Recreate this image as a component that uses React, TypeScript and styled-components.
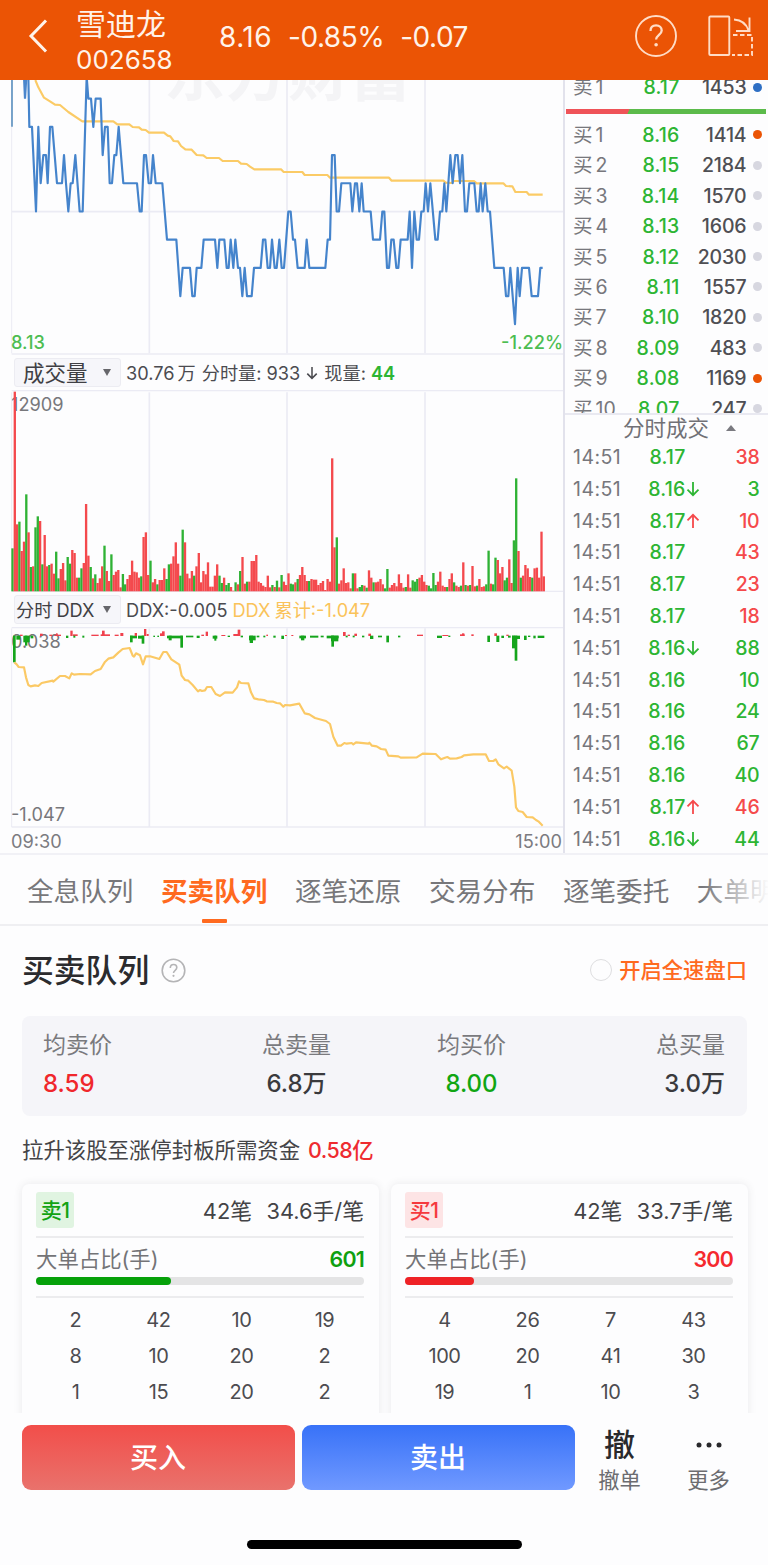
import React from "react";
import styled, { createGlobalStyle } from "styled-components";

const GREEN = "#2db533";
const RED = "#f5494b";
const ORANGE = "#ff6a1f";
const GRID = "#ebebf4";

const GlobalStyle = createGlobalStyle`
  * { box-sizing: border-box; }
  body {
    margin: 0;
    background: #fdfdfe;
    font-family: Inter, "Noto Sans CJK SC", sans-serif;
    color: #333;
  }
`;

const Page = styled.div`
  width: 768px;
  height: 1565px;
  display: flex;
  flex-direction: column;
  overflow: hidden;
  background: #fdfdfe;
`;

/* ---------- header ---------- */

const Header = styled.header`
  height: 80px;
  flex: none;
  display: flex;
  align-items: center;
  padding: 0 15px 0 28px;
  background: #eb5405;
  color: #fff3ea;
`;

const BackIcon = styled.svg`
  flex: none;
  margin-top: -8px;
`;

const StockName = styled.div`
  width: 143px;
  margin-left: 26px;
  padding-top: 2px;
`;

const Name = styled.div`
  font-size: 30px;
  line-height: 38px;
`;

const Code = styled.div`
  font-size: 26px;
  line-height: 34px;
  letter-spacing: 0;
`;

const Quote = styled.div`
  flex: 1;
  display: flex;
  gap: 16px;
  margin-top: -6px;
  font-size: 28px;
  line-height: 36px;
`;

const QuoteValue = styled.span<{ $ls: number }>`
  letter-spacing: ${(p) => p.$ls}px;
`;

const HeaderIcons = styled.div`
  display: flex;
  align-items: center;
  gap: 30px;
  margin-top: -8px;
`;

/* ---------- market area ---------- */

const Market = styled.section`
  flex: none;
  height: 775px;
  display: flex;
  border-bottom: 2px solid #f1f1f6;
`;

const Charts = styled.div`
  width: 565px;
  flex: none;
  border-right: 2px solid #e2e2ec;
`;

const ChartFrame = styled.div<{ $h: number }>`
  position: relative;
  height: ${(p) => p.$h}px;
  overflow: hidden;
`;

const ChartCanvas = styled.svg`
  display: block;
  position: relative;
`;

const ChartLabel = styled.span<{ $color?: string; $side?: "left" | "right"; $top?: number; $bold?: boolean }>`
  position: absolute;
  top: ${(p) => p.$top ?? 0}px;
  ${(p) => (p.$side === "right" ? "right: 0;" : "left: 11px;")}
  color: ${(p) => p.$color ?? "#77777b"};
  font-size: 18.2px;
  line-height: 22px;
  font-weight: ${(p) => (p.$bold ? 500 : 400)};
`;

const Watermark = styled.span`
  position: absolute;
  left: 164px;
  top: -41px;
  font-size: 61px;
  line-height: 70px;
  font-weight: 700;
  letter-spacing: 1px;
  color: #f4f4f6;
`;

const IndicatorBar = styled.div`
  height: 35px;
  display: flex;
  align-items: center;
  padding-left: 14px;
  font-size: 18.2px;
  line-height: 26px;
  color: #4b4b50;
  white-space: nowrap;
`;

const Chip = styled.div<{ $size: number; $pad: number }>`
  width: 107px;
  height: 29px;
  flex: none;
  display: flex;
  align-items: center;
  justify-content: space-between;
  padding: 0 9px 0 ${(p) => p.$pad}px;
  margin-right: 5px;
  border: 1px solid #ececf2;
  border-radius: 3px;
  background: #f6f6fa;
  color: #3f3f44;
  font-size: ${(p) => p.$size}px;
`;

const Triangle = styled.i<{ $up?: boolean }>`
  border: ${(p) => (p.$up ? 5 : 4.5)}px solid transparent;
  ${(p) =>
    p.$up
      ? "border-bottom: 6px solid #7a7a80; border-top: 0;"
      : "border-top: 7px solid #66666b; border-bottom: 0;"}
`;

const Seg = styled.span<{ $color?: string; $gap?: number; $ls?: number; $bold?: boolean }>`
  color: ${(p) => p.$color ?? "inherit"};
  margin-left: ${(p) => p.$gap ?? 0}px;
  letter-spacing: ${(p) => p.$ls ?? 0}px;
  font-weight: ${(p) => (p.$bold ? 600 : 400)};
`;

const ArrowSlot = styled.span<{ $gap?: number }>`
  display: flex;
  margin-left: ${(p) => p.$gap ?? 0}px;
`;

const TimeAxis = styled.div`
  height: 26px;
  display: flex;
  justify-content: space-between;
  padding: 0 1px 0 11px;
  font-size: 18.2px;
  line-height: 27px;
  color: #7b7b80;
`;

/* ---------- order book ---------- */

const Side = styled.div`
  flex: 1;
  display: flex;
  flex-direction: column;
`;

const Book = styled.div`
  height: 334.5px;
  flex: none;
  overflow: hidden;
  border-bottom: 2px solid #e9e9f1;
`;

const BookRow = styled.div<{ $first?: boolean }>`
  height: 30.45px;
  margin-top: ${(p) => (p.$first ? -8.2 : 0)}px;
  display: grid;
  grid-template-columns: 52px 54.5px 67px 22.5px;
  align-items: center;
  padding-left: 8px;
  font-size: 19.5px;
  line-height: 30px;
`;

const Level = styled.span`
  color: #77777c;
  display: flex;
  gap: 3px;
`;

const Price = styled.span`
  color: ${GREEN};
  text-align: right;
  font-weight: 500;
  letter-spacing: 0.2px;
`;

const Qty = styled.span`
  color: #4f4f54;
  text-align: right;
  font-weight: 500;
  letter-spacing: -0.15px;
`;

const Dot = styled.i<{ $color: string }>`
  width: 9px;
  height: 9px;
  border-radius: 50%;
  justify-self: center;
  background: ${(p) => p.$color};
`;

const Ratio = styled.div`
  height: 4.5px;
  margin: 6.8px 3px 6px 1px;
  background: linear-gradient(115deg, #ef5358 0 31.3%, #5cbb4b 31.6%);
`;

const TradesHead = styled.div`
  height: 27.2px;
  flex: none;
  display: flex;
  align-items: center;
  gap: 17px;
  padding-left: 58px;
  font-size: 21.5px;
  line-height: 27px;
  color: #717176;
`;

const TradeRow = styled.div`
  height: 31.8px;
  flex: none;
  display: grid;
  grid-template-columns: 75px 37.5px 20px 54px;
  align-items: center;
  padding-left: 8px;
  font-size: 19.5px;
  line-height: 31px;
`;

const TradeTime = styled.span`
  color: #77777c;
  letter-spacing: 0.45px;
`;

const TradeQty = styled.span<{ $up: boolean }>`
  color: ${(p) => (p.$up ? RED : GREEN)};
  text-align: right;
  font-weight: 500;
  letter-spacing: -0.2px;
`;

/* ---------- tabs ---------- */

const Tabs = styled.nav`
  position: relative;
  flex: none;
  height: 71px;
  display: flex;
  gap: 27.6px;
  padding-left: 27px;
  overflow: hidden;
  border-bottom: 2px solid #efeff2;
  white-space: nowrap;
  &::after {
    content: "";
    position: absolute;
    right: 0;
    top: 0;
    width: 66px;
    height: 60px;
    background: linear-gradient(90deg, rgba(253, 253, 254, 0), rgba(253, 253, 254, 0.98));
  }
`;

const Tab = styled.div<{ $on?: boolean }>`
  flex: none;
  display: flex;
  flex-direction: column;
  align-items: center;
  justify-content: space-between;
  font-size: 26.6px;
  line-height: 40px;
  padding-top: 16px;
  color: ${(p) => (p.$on ? ORANGE : "#77777a")};
  font-weight: ${(p) => (p.$on ? 700 : 400)};
  &::after {
    content: "";
    width: 25px;
    height: 4px;
    margin-bottom: 1px;
    border-radius: 1px;
    background: ${(p) => (p.$on ? ORANGE : "transparent")};
  }
`;

/* ---------- queue section ---------- */

const Queue = styled.section`
  flex: none;
  height: 487px;
  overflow: hidden;
  padding: 21px 21px 0 22px;
`;

const TitleRow = styled.div`
  height: 46px;
  display: flex;
  align-items: center;
`;

const Title = styled.h2`
  margin: 0 12px 0 0;
  padding-top: 2px;
  font-size: 31.8px;
  line-height: 46px;
  font-weight: 500;
  color: #2b2b2e;
`;

const FullSpeed = styled.div`
  margin-left: auto;
  display: flex;
  align-items: center;
  gap: 7px;
  font-size: 21.3px;
  font-weight: 500;
  line-height: 26px;
  color: ${ORANGE};
`;

const FullSpeedText = styled.span`
  padding-bottom: 1px;
`;

const Radio = styled.i`
  width: 22px;
  height: 22px;
  border-radius: 50%;
  border: 1.5px solid #dedee0;
`;

const Summary = styled.div`
  height: 100px;
  margin-top: 23px;
  padding: 10px 22px 0 21px;
  display: flex;
  justify-content: space-between;
  border-radius: 8px;
  background: #f5f5f9;
`;

const Stat = styled.div<{ $align: string; $shift?: number }>`
  display: flex;
  flex-direction: column;
  align-items: ${(p) => p.$align};
  margin-left: ${(p) => p.$shift ?? 0}px;
`;

const StatLabel = styled.span`
  font-size: 23px;
  line-height: 38px;
  color: #7a7a7e;
`;

const StatValue = styled.span<{ $color?: string }>`
  font-size: 24px;
  line-height: 40px;
  font-weight: 500;
  color: ${(p) => p.$color ?? "#3a3a3d"};
`;

const Funding = styled.div`
  display: flex;
  gap: 8px;
  margin-top: 18px;
  font-size: 21.4px;
  line-height: 32px;
  color: #444447;
  b { font-weight: 500; color: #ee2b30; letter-spacing: -0.5px; }
`;

const Cards = styled.div`
  display: flex;
  gap: 12px;
  margin-top: 18px;
`;

const Card = styled.div`
  flex: 1;
  height: 300px;
  padding: 8px 15px 0 14px;
  border-radius: 7px;
  background: #fdfdfe;
  box-shadow: 0 0 9px rgba(60, 60, 70, 0.1);
`;

const CardHead = styled.div`
  height: 46px;
  display: flex;
  align-items: flex-start;
  border-bottom: 2px solid #ececee;
  font-size: 21.8px;
  line-height: 38px;
  color: #434346;
`;

const Badge = styled.span<{ $buy: boolean }>`
  width: 38px;
  height: 36px;
  margin-right: auto;
  text-align: center;
  border-radius: 3px;
  font-weight: 500;
  font-size: 21px;
  line-height: 37px;
  letter-spacing: -0.5px;
  color: ${(p) => (p.$buy ? "#f5393d" : "#12a312")};
  background: ${(p) => (p.$buy ? "#fde4e5" : "#e0f4e1")};
`;

const HeadText = styled.span`
  margin-left: 14.5px;
`;

const BigRow = styled.div`
  height: 39px;
  display: flex;
  justify-content: space-between;
  font-size: 21.4px;
  line-height: 42px;
  color: #747477;
`;

const BigValue = styled.span<{ $buy: boolean }>`
  font-weight: 600;
  letter-spacing: -0.8px;
  color: ${(p) => (p.$buy ? "#f5292e" : "#0fa00f")};
`;

const Meter = styled.div<{ $buy: boolean; $pct: number }>`
  height: 8px;
  margin-bottom: 11px;
  border-radius: 4px;
  background: #e4e4e5;
  &::before {
    content: "";
    display: block;
    height: 8px;
    width: ${(p) => p.$pct}%;
    border-radius: 4px;
    background: ${(p) => (p.$buy ? "#ef2226" : "#06a10a")};
  }
`;

const Lots = styled.div`
  display: grid;
  grid-template-columns: repeat(4, 83px);
  grid-auto-rows: 36px;
  margin: 0 -2px;
  padding-top: 4px;
  text-align: center;
  font-size: 20px;
  line-height: 36px;
  letter-spacing: -0.4px;
  color: #4c4c50;
`;

const Rule = styled.div`
  height: 2px;
  background: #ececee;
`;

/* ---------- bottom bar ---------- */

const Bottom = styled.footer`
  flex: 1;
  display: flex;
  flex-direction: column;
  align-items: center;
  background: #fdfdfe;
`;

const Actions = styled.div`
  width: 100%;
  height: 78px;
  display: flex;
  gap: 7px;
  padding: 12px 0 0 21.5px;
`;

const TradeButton = styled.button<{ $buy?: boolean }>`
  width: 273px;
  height: 65px;
  padding: 0;
  border: 0;
  border-radius: 9px;
  color: #fff;
  font: 500 28px/66px Inter, "Noto Sans CJK SC", sans-serif;
  background: ${(p) =>
    p.$buy ? "linear-gradient(#f24e4a, #e9726c)" : "linear-gradient(#3872f8, #7099ff)"};
`;

const Tool = styled.div<{ $gap?: number }>`
  width: 60px;
  margin-left: ${(p) => p.$gap ?? 0}px;
  text-align: center;
  font-size: 21.3px;
  line-height: 32px;
  color: #6c6c70;
`;

const ToolGlyph = styled.div`
  height: 39px;
  display: flex;
  align-items: center;
  justify-content: center;
  font-size: 31px;
  line-height: 39px;
  font-weight: 500;
  color: #29292c;
`;

const HomeBar = styled.div`
  width: 275px;
  height: 9px;
  margin-top: 49px;
  border-radius: 5px;
  background: #000;
`;

/* ---------- chart data ---------- */

// Price series: x position followed by its price level (a is the highest, i the lowest).
const PRICE =
  "85^ 88b 96b 108e 115b 122d 130c 138c 143d 150b 157b 171d 186d 192c 198d 205e 212d 218d 226c 239e 248e 260^ 265a 273a 280b 287a 302a 308c 315b 323b 329d 336d 343c 349c 356b 370d 411d 419e 425e 432c 438c 446d 453d 459c 467d 487d 501f 529f 541h 548g 570g 577h 584h 590g 604g 611f 645f 652g 658f 673f 680g 686g 692f 700g 706f 714g 720g 727h 734g 741h 755h 762g 782g 789f 796f 803g 810g 816f 824g 830g 838f 845g 852g 865e 872e 879f 885f 893g 914g 920f 928g 976g 983f 990f 996c 1004c 1010e 1017e 1024d 1051d 1057e 1065d 1071d 1078e 1085d 1091e 1112e 1119f 1140f 1147e 1153e 1161g 1167g 1174f 1181f 1189g 1195g 1202f 1223f 1229e 1236g 1243e 1250f 1257f 1264e 1271e 1277d 1284e 1291d 1306f 1313f 1320e 1327e 1333d 1339e 1351c 1358d 1366c 1373c 1380d 1387c 1395e 1401e 1408d 1423d 1430e 1436e 1442d 1448e 1456d 1463e 1470e 1483g 1511g 1518h 1525h 1531g 1545i 1553g 1559h 1566g 1587g 1595h 1614h 1621g 1628g";

const levelY = (k: string) => (k === "^" ? 5 : 71 + 84.6 * (k.charCodeAt(0) - 97));
const pricePoints = PRICE.split(" ")
  .map((p) => `${parseInt(p, 10)},${levelY(p.slice(-1))}`)
  .join(" ");

const AVERAGE =
  "106,15 115,37 132,68 150,79 165,89 180,90 205,111 247,139 340,139 352,148 388,148 398,156 417,157 425,164 437,165 447,173 492,173 503,182 511,184 521,198 534,199 543,213 556,223 575,224 590,240 610,241 620,249 657,249 668,258 714,258 723,266 740,267 750,275 763,283 843,283 851,291 907,291 914,300 982,300 990,308 1167,308 1175,317 1330,317 1337,323 1354,324 1362,318 1422,318 1430,325 1510,325 1518,333 1537,334 1546,351 1580,351 1587,359 1628,359";

// One entry per minute: colour letter followed by the top of the bar.
const VOLUME =
  "g580 r110 r508 g500 r588 r560 g418 r532 g636 r634 g517 g484 r498 g628 r540 r634 g630 r626 r656 g590 g670 r642 r624 r676 g606 g626 r585 r594 r668 g668 g640 r624 r447 r602 g636 r670 g658 r684 r670 r634 g572 r648 r678 g598 r660 r650 r645 r697 g657 g688 r672 r660 r617 r650 r652 r668 g664 r546 r532 r660 g617 r682 r672 g688 r675 r675 r640 g672 g628 r626 r604 r562 r626 g662 g524 r562 r656 r670 r648 g662 r634 r594 r682 r648 r658 r622 r695 r695 r662 r628 g662 g684 r668 g690 g684 r696 r707 g682 r688 g648 r606 r686 g680 r680 r618 r618 r600 r680 r684 r692 r696 r662 r697 g690 r696 g677 r697 g660 r680 r690 r655 g686 g688 r682 g672 r660 r636 r660 r678 g678 r672 r674 r674 r690 r684 r678 r705 r672 r680 r310 r577 g547 r686 r676 r640 r684 r682 r700 g655 r655 r700 g696 g690 r692 g698 r646 r668 g682 r682 r680 r672 r688 g700 g642 r698 r690 r684 r694 r658 r684 r698 g696 r658 r698 g676 g680 g672 r668 r660 r680 r690 g692 g700 g654 g690 r680 r650 r692 r696 g696 r672 r655 g682 r692 r696 g692 r622 g690 r692 g690 r633 r694 g692 r672 r696 r694 g688 g587 r686 g688 g608 r615 r655 r636 g676 g668 r613 r684 g556 g370 r588 g668 r662 r630 r640 r666 g668 r640 r638 r668 r530 r664";

const volumeBars = VOLUME.split(" ").map((v, i) => ({
  x: 34 + i * 6.9,
  top: Number(v.slice(1)),
  up: v[0] === "r",
}));

const DDX_LINE =
  "43,217 50,223 56,231 72,232 78,262 85,285 92,289 105,286 115,288 125,279 158,272 160,275 180,258 195,258 208,265 215,250 222,254 240,252 272,253 285,243 302,237 314,217 325,206 340,202 355,188 368,177 389,174 398,197 402,200 408,190 420,196 429,223 437,199 450,199 478,207 490,186 500,186 514,208 538,224 545,257 555,270 565,272 578,285 594,304 600,300 606,303 615,301 621,291 634,291 647,312 660,318 675,307 698,308 711,292 717,274 723,279 745,280 753,307 762,325 775,328 792,330 800,334 820,335 830,339 840,340 850,350 855,345 870,346 898,341 914,370 928,373 945,384 978,393 990,402 1000,440 1013,467 1023,467 1033,459 1040,461 1055,459 1060,463 1068,457 1105,461 1108,458 1116,467 1130,469 1143,477 1157,479 1165,497 1195,499 1202,503 1250,502 1268,491 1307,492 1323,508 1335,503 1342,501 1350,506 1370,505 1385,501 1392,496 1420,493 1457,493 1467,513 1480,513 1487,508 1495,523 1512,535 1520,530 1535,542 1543,590 1548,652 1555,663 1568,666 1580,681 1598,682 1608,690 1615,694 1628,707";

// x, width, height; positive heights rise above the zero line, negative ones hang below it.
const DDX_BARS: [number, number, number][] = [
  [39, 8, -80], [49, 12, -12], [60, 8, 4], [70, 19, -20], [75, 7, -30], [92, 8, -8],
  [120, 8, 7], [148, 8, 4], [163, 20, 4], [168, 5, 8], [198, 7, -7], [211, 7, 16], [219, 14, 5],
  [220, 6, -6], [247, 6, -6], [274, 22, 4], [302, 28, 5], [306, 8, 16], [344, 12, 4], [361, 9, 9],
  [390, 21, -8], [390, 8, -20], [404, 7, 9], [414, 18, -9], [425, 8, -24], [432, 7, 21], [440, 6, 6],
  [460, 5, -4], [472, 5, -4], [480, 12, 8], [486, 8, 14], [501, 47, -8], [506, 9, -14], [541, 8, -36],
  [558, 22, -5], [590, 9, -7], [604, 8, 4], [617, 7, 13], [638, 14, -9], [643, 6, -15], [664, 12, 3],
  [683, 7, -4], [700, 20, 6], [713, 8, 19], [722, 7, -5], [747, 20, -14], [749, 10, -22], [770, 8, -5],
  [790, 6, -5], [799, 5, 4], [820, 7, -6], [844, 8, -10], [855, 6, 3], [874, 6, 3],
  [898, 20, -8], [903, 10, -14], [930, 25, -6], [962, 9, -5], [980, 36, -8], [993, 22, -17], [994, 8, -33],
  [1029, 8, 12], [1043, 7, 4], [1037, 6, -5], [1063, 8, 7], [1058, 6, -5], [1086, 7, -5], [1105, 8, 7],
  [1110, 10, -10], [1134, 12, -5], [1159, 8, -20], [1194, 7, -5], [1251, 18, 4], [1311, 15, -7],
  [1327, 18, 3], [1345, 6, -4], [1380, 14, 5], [1386, 7, 8], [1414, 7, 5], [1462, 8, -19],
  [1483, 8, 8], [1489, 9, -19], [1504, 8, -7], [1519, 7, 4], [1524, 8, -6], [1536, 24, -10],
  [1536, 9, -38], [1544, 8, -75], [1572, 8, -13], [1584, 7, -4], [1600, 7, -8], [1613, 20, -7],
];

const verticals = [448, 861, 1275];

const BOOK: [string, string, string, string][] = [
  ["1", "8.16", "1414", "#eb5405"],
  ["2", "8.15", "2184", "#d7d7e0"],
  ["3", "8.14", "1570", "#d7d7e0"],
  ["4", "8.13", "1606", "#d7d7e0"],
  ["5", "8.12", "2030", "#d7d7e0"],
  ["6", "8.11", "1557", "#d7d7e0"],
  ["7", "8.10", "1820", "#d7d7e0"],
  ["8", "8.09", "483", "#d7d7e0"],
  ["9", "8.08", "1169", "#eb5405"],
  ["10", "8.07", "247", "#d7d7e0"],
];

// price, arrow direction, quantity, whether the quantity is an active buy
const TRADES: [string, "" | "up" | "down", string, boolean][] = [
  ["8.17", "", "38", true],
  ["8.16", "down", "3", false],
  ["8.17", "up", "10", true],
  ["8.17", "", "43", true],
  ["8.17", "", "23", true],
  ["8.17", "", "18", true],
  ["8.16", "down", "88", false],
  ["8.16", "", "10", false],
  ["8.16", "", "24", false],
  ["8.16", "", "67", false],
  ["8.16", "", "40", false],
  ["8.17", "up", "46", true],
  ["8.16", "down", "44", false],
];

const Arrow = ({ dir, color, size = 14 }: { dir: "up" | "down"; color: string; size?: number }) => (
  <svg width={size} height={16} viewBox="0 0 14 16" fill="none" stroke={color} strokeWidth="1.8">
    <path d={dir === "up" ? "M7 15V2M1.5 7.3L7 1.8l5.5 5.5" : "M7 1v13M1.5 8.7L7 14.2l5.5-5.5"} />
  </svg>
);

const Verticals = ({ y1, y2 }: { y1: number; y2: number }) => (
  <g stroke={GRID} strokeWidth="5">
    <path d={`M35 ${y1}V${y2}`} strokeWidth="3" />
    {verticals.map((x) => (
      <path key={x} d={`M${x} ${y1}V${y2}`} />
    ))}
  </g>
);

const QueueCard = ({
  buy, count, avg, big, pct, lots,
}: { buy: boolean; count: string; avg: string; big: string; pct: number; lots: number[] }) => (
  <Card>
    <CardHead>
      <Badge $buy={buy}>{buy ? "买1" : "卖1"}</Badge>
      <HeadText>{count}</HeadText>
      <HeadText>{avg}</HeadText>
    </CardHead>
    <BigRow>
      <span>大单占比(手)</span>
      <BigValue $buy={buy}>{big}</BigValue>
    </BigRow>
    <Meter $buy={buy} $pct={pct} />
    <Rule />
    <Lots>
      {lots.map((n, i) => (
        <span key={i}>{n}</span>
      ))}
    </Lots>
  </Card>
);

export default function App() {
  return (
    <Page>
      <GlobalStyle />
      <Header>
        <BackIcon width="22" height="36" viewBox="0 0 22 36" fill="none" stroke="#fff3ea" strokeWidth="3">
          <path d="M18 2.500L3 18l15 15.500" />
        </BackIcon>
        <StockName>
          <Name>雪迪龙</Name>
          <Code>002658</Code>
        </StockName>
        <Quote>
          <QuoteValue $ls={0.5}>8.16</QuoteValue>
          <QuoteValue $ls={-0.5}>-0.85%</QuoteValue>
          <QuoteValue $ls={-0.5}>-0.07</QuoteValue>
        </Quote>
        <HeaderIcons>
          <svg width="44" height="44" viewBox="0 0 44 44" fill="none" stroke="#ffdcc6" strokeWidth="1.9">
            <circle cx="22" cy="22" r="20" />
            <path d="M16.500 17c0-3.600 2.300-5.600 5.600-5.600s5.600 2 5.600 5c0 4.300-5.600 4.500-5.600 9.200" strokeWidth="2.300" />
            <circle cx="22.100" cy="30.800" r="1.800" fill="#ffdcc6" stroke="none" />
          </svg>
          <svg width="45" height="42" viewBox="0 0 45 42" fill="none" stroke="#ffdcc6" strokeWidth="1.900">
            <rect x="1.300" y="1.500" width="20" height="38.500" rx="1" />
            <path d="M26 4.500c7 .5 12.500 4.500 14.500 11M41.500 2.500V16H28" />
            <path d="M25 20h19v20H24" strokeDasharray="4.500 2.500" />
          </svg>
        </HeaderIcons>
      </Header>

      <Market>
        <Charts>
          <ChartFrame $h={275}>
            <Watermark>东方财富</Watermark>
            <ChartCanvas width="563" height="275" viewBox="0 15 1689 825" fill="none">
              <Verticals y1={15} y2={835} />
              <path d="M35 410H1689M35 837H1689" stroke={GRID} strokeWidth="5" />
              <polyline points={AVERAGE} stroke="#fbcb66" strokeWidth="6.500" strokeLinejoin="round" />
              <path d="M36 15V155" stroke="#5f93c0" strokeWidth="5" />
              <path d="M72 5L75 71L79 5" stroke="#4a86cd" strokeWidth="6.500" />
              <polyline points={pricePoints} stroke="#4584cc" strokeWidth="6.500" strokeLinejoin="round" />
            </ChartCanvas>
            <ChartLabel $top={251} $color="#4dbd52" $bold>8.13</ChartLabel>
            <ChartLabel $top={251} $color="#4dbd52" $side="right" $bold>-1.22%</ChartLabel>
          </ChartFrame>

          <IndicatorBar>
            <Chip $size={21.5} $pad={8}>
              成交量
              <Triangle />
            </Chip>
            <Seg>30.76</Seg>
            <Seg $gap={3}>万</Seg>
            <Seg $gap={6}>分时量:</Seg>
            <Seg $gap={5}>933</Seg>
            <ArrowSlot $gap={6}>
              <Arrow dir="down" color="#4b4b50" size={12} />
            </ArrowSlot>
            <Seg $gap={6}>现量:</Seg>
            <Seg $gap={5} $color={GREEN} $bold>44</Seg>
          </IndicatorBar>

          <ChartFrame $h={202}>
            <ChartLabel $top={3}>12909</ChartLabel>
            <ChartCanvas width="563" height="202" viewBox="0 105 1689 606">
              <path d="M35 107H1689M35 709H1689" stroke={GRID} strokeWidth="4" />
              <Verticals y1={112} y2={707} />
              {volumeBars.map((b, i) => (
                <rect key={i} x={b.x} y={b.top} width="7" height={709 - b.top} fill={b.up ? "#f4494d" : "#2fb235"} />
              ))}
            </ChartCanvas>
          </ChartFrame>

          <IndicatorBar>
            <Chip $size={18.2} $pad={1}>
              <span>
                分时<Seg $gap={4}>DDX</Seg>
              </span>
              <Triangle />
            </Chip>
            <Seg>DDX:-0.005</Seg>
            <Seg $gap={5} $color="#fac35a">DDX</Seg>
            <Seg $gap={4} $color="#fac35a">累计:-1.047</Seg>
          </IndicatorBar>

          <ChartFrame $h={201}>
            <ChartLabel $top={3}>0.038</ChartLabel>
            <ChartLabel $top={176}>-1.047</ChartLabel>
            <ChartCanvas width="563" height="201" viewBox="0 111 1689 603" fill="none">
              <path d="M35 112H1689M35 711H1689" stroke={GRID} strokeWidth="5" />
              <Verticals y1={115} y2={711} />
              {DDX_BARS.map(([x, w, h], i) => (
                <rect key={i} x={x} y={h > 0 ? 138 - h : 137} width={w} height={Math.abs(h)} fill={h > 0 ? "#f0414d" : "#15a51c"} />
              ))}
              <polyline points={DDX_LINE} stroke="#fbc965" strokeWidth="6.500" strokeLinejoin="round" />
            </ChartCanvas>
          </ChartFrame>
          <TimeAxis>
            <span>09:30</span>
            <span>15:00</span>
          </TimeAxis>
        </Charts>

        <Side>
          <Book>
            <BookRow $first>
              <Level><span>卖</span><span>1</span></Level>
              <Price>8.17</Price>
              <Qty>1453</Qty>
              <Dot $color="#2e6fc4" />
            </BookRow>
            <Ratio />
            {BOOK.map(([n, price, qty, dot]) => (
              <BookRow key={n}>
                <Level><span>买</span><span>{n}</span></Level>
                <Price>{price}</Price>
                <Qty>{qty}</Qty>
                <Dot $color={dot} />
              </BookRow>
            ))}
          </Book>
          <TradesHead>
            分时成交
            <Triangle $up />
          </TradesHead>
          {TRADES.map(([price, dir, qty, up], i) => (
            <TradeRow key={i}>
              <TradeTime>14:51</TradeTime>
              <Price>{price}</Price>
              <ArrowSlot>{dir && <Arrow dir={dir} color={dir === "up" ? RED : GREEN} />}</ArrowSlot>
              <TradeQty $up={up}>{qty}</TradeQty>
            </TradeRow>
          ))}
        </Side>
      </Market>

      <Tabs>
        <Tab>全息队列</Tab>
        <Tab $on>买卖队列</Tab>
        <Tab>逐笔还原</Tab>
        <Tab>交易分布</Tab>
        <Tab>逐笔委托</Tab>
        <Tab>大单明细</Tab>
      </Tabs>

      <Queue>
        <TitleRow>
          <Title>买卖队列</Title>
          <svg width="25" height="25" viewBox="0 0 25 25" fill="none" stroke="#b4b4b6" strokeWidth="1.600">
            <circle cx="12.500" cy="12.500" r="11.300" />
            <path d="M9.300 10c0-2.300 1.400-3.500 3.300-3.500s3.200 1.300 3.200 3.100c0 2.700-3.300 2.700-3.300 5.500" />
            <circle cx="12.500" cy="17.800" r="1.100" fill="#b4b4b6" stroke="none" />
          </svg>
          <FullSpeed>
            <Radio />
            <FullSpeedText>开启全速盘口</FullSpeedText>
          </FullSpeed>
        </TitleRow>

        <Summary>
          <Stat $align="flex-start">
            <StatLabel>均卖价</StatLabel>
            <StatValue $color="#f0272c">8.59</StatValue>
          </Stat>
          <Stat $align="center" $shift={44}>
            <StatLabel>总卖量</StatLabel>
            <StatValue>6.8万</StatValue>
          </Stat>
          <Stat $align="center">
            <StatLabel>均买价</StatLabel>
            <StatValue $color="#10a613">8.00</StatValue>
          </Stat>
          <Stat $align="flex-end" $shift={44}>
            <StatLabel>总买量</StatLabel>
            <StatValue>3.0万</StatValue>
          </Stat>
        </Summary>

        <Funding>
          <span>拉升该股至涨停封板所需资金</span>
          <b>0.58亿</b>
        </Funding>

        <Cards>
          <QueueCard buy={false} count="42笔" avg="34.6手/笔" big="601" pct={41.3}
            lots={[2, 42, 10, 19, 8, 10, 20, 2, 1, 15, 20, 2]} />
          <QueueCard buy count="42笔" avg="33.7手/笔" big="300" pct={21}
            lots={[4, 26, 7, 43, 100, 20, 41, 30, 19, 1, 10, 3]} />
        </Cards>
      </Queue>

      <Bottom>
        <Actions>
          <TradeButton $buy>买入</TradeButton>
          <TradeButton>卖出</TradeButton>
          <Tool $gap={8}>
            <ToolGlyph>撤</ToolGlyph>
            撤单
          </Tool>
          <Tool $gap={22}>
            <ToolGlyph>
              <svg width="26" height="6" viewBox="0 0 26 6" fill="#29292c">
                <circle cx="3" cy="3" r="2.500" />
                <circle cx="13" cy="3" r="2.500" />
                <circle cx="23" cy="3" r="2.500" />
              </svg>
            </ToolGlyph>
            更多
          </Tool>
        </Actions>
        <HomeBar />
      </Bottom>
    </Page>
  );
}
